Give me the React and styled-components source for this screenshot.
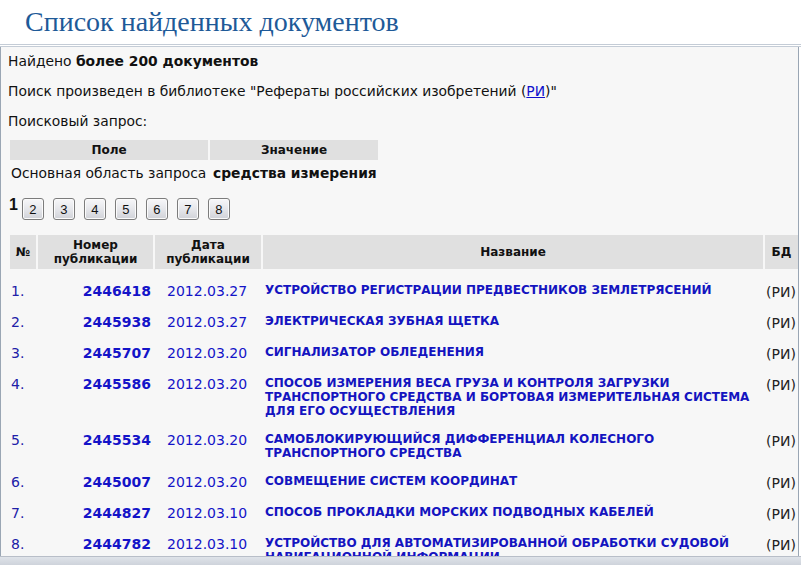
import React from 'react';
import styled, { createGlobalStyle } from 'styled-components';

const GlobalStyle = createGlobalStyle`
  html, body {
    margin: 0;
    padding: 0;
    background: #fff;
    overflow: hidden;
  }
  body {
    font-family: 'DejaVu Sans', Verdana, sans-serif;
    color: #111;
  }
`;

const Page = styled.div`
  width: 801px;
  height: 565px;
  overflow: hidden;
`;

const Header = styled.h1`
  margin: 0;
  height: 44px;
  padding-left: 25px;
  font-family: 'Liberation Serif', 'DejaVu Serif', serif;
  font-weight: normal;
  font-size: 28px;
  line-height: 44px;
  color: #1e5a98;
  border-bottom: 3px double #c4ccd6;
`;

const Panel = styled.div`
  background: #f7f7f7;
  border-left: 1px solid #9aa6b4;
  border-right: 1px solid #9aa6b4;
  margin-right: 2px;
  padding: 5px 0 0 7px;
  font-size: 13.85px;
  height: 600px;
`;

const Line = styled.p`
  margin: 0 0 ${({ gap }) => gap || 12}px;
  line-height: 18px;
`;

const Link = styled.a`
  color: #1010cc;
  text-decoration: underline;
`;

const QueryTable = styled.table`
  border-collapse: separate;
  border-spacing: 2px;
  margin: 0;
  font-size: 13.85px;
`;

const HeadCell = styled.th`
  background: #e0e0e0;
  font-size: 12px;
  font-weight: bold;
  text-align: center;
  padding: ${({ pad }) => pad || '3px 4px'};
  width: ${({ w }) => (w ? `${w}px` : 'auto')};
  vertical-align: middle;
  line-height: 14px;
`;

const QueryCell = styled.td`
  padding: 3px 1px;
  padding-left: ${({ bold }) => (bold ? '3px' : '1px')};
  font-weight: ${({ bold }) => (bold ? 'bold' : 'normal')};
  white-space: nowrap;
`;

const Pager = styled.div`
  display: flex;
  align-items: flex-start;
  gap: 9px;
  margin: 12px 0 0 1px;
  height: 24px;
`;

const Current = styled.span`
  font-family: 'Liberation Sans', Arial, sans-serif;
  font-weight: bold;
  font-size: 16px;
  line-height: 14px;
  margin-right: -5px;
`;

const PageButton = styled.button`
  width: 22px;
  height: 22px;
  padding: 0;
  font-family: 'Liberation Sans', Arial, sans-serif;
  font-size: 13px;
  color: #111;
  border: 1px solid #7c7c7c;
  border-radius: 3px;
  background: linear-gradient(#f7f7f9, #e6e7eb 50%, #d0d2d8);
  box-shadow: inset 0 0 0 1px #fbfbfb;
`;

const Results = styled.table`
  border-collapse: separate;
  border-spacing: 2px;
  margin: 11px 0 0 0;
  width: 792px;
  table-layout: fixed;
`;

const Cell = styled.td`
  vertical-align: top;
  padding: 12px 2px 0;
  text-align: ${({ align }) => align || 'left'};
`;

const RowNum = styled(Cell)`
  color: #2020a8;
  font-size: 14px;
  line-height: 17px;
  padding-left: 1px;
`;

const PubNum = styled(Cell)`
  color: #1414c8;
  font-weight: bold;
  font-size: 14px;
  line-height: 17px;
`;

const PubDate = styled(Cell)`
  color: #1414c8;
  font-size: 14px;
  line-height: 17px;
  padding-left: 12px;
`;

const Title = styled(Cell)`
  color: #1414c0;
  font-weight: bold;
  font-size: 12px;
  line-height: 14px;
  padding-left: 2px;
  padding-right: 8px;
`;

const Db = styled(Cell)`
  color: #222;
  font-size: 14px;
  line-height: 16px;
  padding: 13px 0 0 1px;
  white-space: nowrap;
`;

const StatusBar = styled.div`
  position: fixed;
  left: 0;
  right: 0;
  bottom: 0;
  height: 8px;
  background: linear-gradient(#dfe3e9, #ced3db);
  border-top: 1px solid #b8bec8;
`;

const rows = [
  ['2446418', '2012.03.27', 'УСТРОЙСТВО РЕГИСТРАЦИИ ПРЕДВЕСТНИКОВ ЗЕМЛЕТРЯСЕНИЙ'],
  ['2445938', '2012.03.27', 'ЭЛЕКТРИЧЕСКАЯ ЗУБНАЯ ЩЕТКА'],
  ['2445707', '2012.03.20', 'СИГНАЛИЗАТОР ОБЛЕДЕНЕНИЯ'],
  ['2445586', '2012.03.20', 'СПОСОБ ИЗМЕРЕНИЯ ВЕСА ГРУЗА И КОНТРОЛЯ ЗАГРУЗКИ ТРАНСПОРТНОГО СРЕДСТВА И БОРТОВАЯ ИЗМЕРИТЕЛЬНАЯ СИСТЕМА ДЛЯ ЕГО ОСУЩЕСТВЛЕНИЯ'],
  ['2445534', '2012.03.20', 'САМОБЛОКИРУЮЩИЙСЯ ДИФФЕРЕНЦИАЛ КОЛЕСНОГО ТРАНСПОРТНОГО СРЕДСТВА'],
  ['2445007', '2012.03.20', 'СОВМЕЩЕНИЕ СИСТЕМ КООРДИНАТ'],
  ['2444827', '2012.03.10', 'СПОСОБ ПРОКЛАДКИ МОРСКИХ ПОДВОДНЫХ КАБЕЛЕЙ'],
  ['2444782', '2012.03.10', 'УСТРОЙСТВО ДЛЯ АВТОМАТИЗИРОВАННОЙ ОБРАБОТКИ СУДОВОЙ НАВИГАЦИОННОЙ ИНФОРМАЦИИ'],
];

const App = () => {
  return (
    <Page>
      <GlobalStyle />
      <Header>Список найденных документов</Header>
      <Panel>
        <Line>Найдено <b>более 200 документов</b></Line>
        <Line>Поиск произведен в библиотеке "Рефераты российских изобретений (<Link href="#">РИ</Link>)"</Line>
        <Line gap={8}>Поисковый запрос:</Line>
        <QueryTable>
          <thead>
            <tr>
              <HeadCell w={190}>Поле</HeadCell>
              <HeadCell w={160}>Значение</HeadCell>
            </tr>
          </thead>
          <tbody>
            <tr>
              <QueryCell>Основная область запроса</QueryCell>
              <QueryCell bold>средства измерения</QueryCell>
            </tr>
          </tbody>
        </QueryTable>
        <Pager>
          <Current>1</Current>
          {[2, 3, 4, 5, 6, 7, 8].map((n) => (
            <PageButton key={n}>{n}</PageButton>
          ))}
        </Pager>
        <Results>
          <colgroup>
            <col style={{ width: 26 }} />
            <col style={{ width: 115 }} />
            <col style={{ width: 106 }} />
            <col />
            <col style={{ width: 33 }} />
          </colgroup>
          <thead>
            <tr>
              <HeadCell pad="9px 2px">№</HeadCell>
              <HeadCell pad="3px 2px">Номер<br />публикации</HeadCell>
              <HeadCell pad="3px 2px">Дата<br />публикации</HeadCell>
              <HeadCell>Название</HeadCell>
              <HeadCell pad="3px 2px">БД</HeadCell>
            </tr>
          </thead>
          <tbody>
            {rows.map(([num, date, title], i) => (
              <tr key={num}>
                <RowNum>{i + 1}.</RowNum>
                <PubNum align="right">{num}</PubNum>
                <PubDate>{date}</PubDate>
                <Title>{title}</Title>
                <Db>(РИ)</Db>
              </tr>
            ))}
          </tbody>
        </Results>
      </Panel>
      <StatusBar />
    </Page>
  );
};

export default App;
